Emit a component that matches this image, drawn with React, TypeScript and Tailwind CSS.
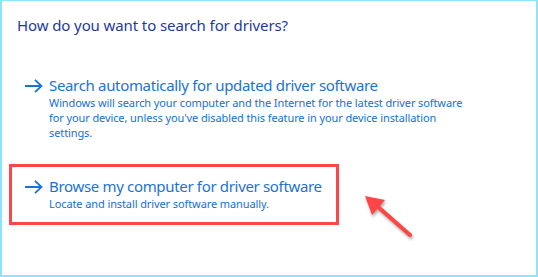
const font = { fontFamily: '"Noto Sans", "Open Sans", sans-serif' };

function Arrow() {
  return (
    <svg className="mt-[3px] mr-[6px] shrink-0" width="18" height="14" viewBox="0 0 18 14" fill="none">
      <path d="M0 7H16.5M10 0.8L16.5 7L10 13.2" stroke="#1a73d4" strokeWidth="1.8" />
    </svg>
  );
}

function Option({ title, desc }: { title: string; desc: string[] }) {
  return (
    <div className="flex items-start">
      <Arrow />
      <div>
        <div className="text-[15px] leading-[19px] tracking-[-0.33px] text-[#1a73d4]">{title}</div>
        {desc.map((d) => (
          <div key={d} className="text-[11px] leading-[15px] tracking-[-0.1px] text-[#1470d6]">
            {d}
          </div>
        ))}
      </div>
    </div>
  );
}

export default function App() {
  return (
    <div
      className="relative w-[538px] h-[277px] bg-white border-2 border-t border-[#8be4f8] overflow-hidden"
      style={font}
    >
      <h1 className="pl-[15px] pt-[13px] text-[15px] leading-[22px] tracking-[-0.1px] text-[#1e3a9c]">
        How do you want to search for drivers?
      </h1>
      <div className="pl-[23px] pt-[40px]">
        <Option
          title="Search automatically for updated driver software"
          desc={[
            'Windows will search your computer and the Internet for the latest driver software',
            "for your device, unless you've disabled this feature in your device installation",
            'settings.',
          ]}
        />
      </div>
      <div className="ml-[7px] mt-[24px] w-[330px] h-[61px] border-[3px] border-[#ff4545] pl-[13px] pt-[10px]">
        <Option
          title="Browse my computer for driver software"
          desc={['Locate and install driver software manually.']}
        />
      </div>
      <svg
        className="absolute left-[353px] top-[184px]"
        width="70"
        height="66"
        viewBox="0 0 70 66"
        style={{ filter: 'drop-shadow(1px 2px 1.5px rgba(0,0,0,0.35))' }}
      >
        <line x1="22" y1="21" x2="55" y2="50" stroke="#ff4545" strokeWidth="4" strokeLinecap="round" />
        <polygon points="10,11 17,30 30,15" fill="#ff4545" />
      </svg>
    </div>
  );
}
